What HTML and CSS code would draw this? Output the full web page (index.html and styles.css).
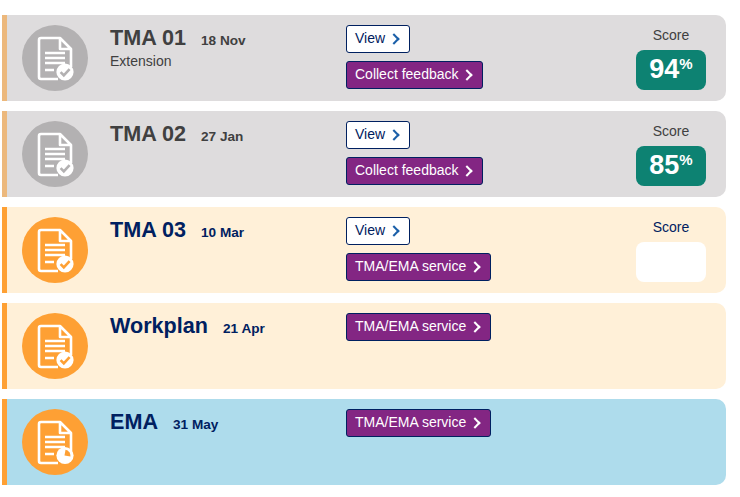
FILE: index.html
```html
<!DOCTYPE html>
<html>
	<head>
		<meta charset="utf-8">
		<title>Assignments</title>
		<link rel="stylesheet" href="styles.css">
	</head>
	<body>
		<svg class="defs" width="0" height="0">
			<symbol id="doc" viewBox="0 0 66 66">
				<path d="M19 13H38L49 24V42M38 13V24H49M36 54H19Q17 54 17 52V15Q17 13 19 13" fill="none" stroke="#fff" stroke-width="2.6" stroke-linejoin="round"/>
				<path d="M23 28H43M23 33H43M23 38H43M23 45H32" fill="none" stroke="#fff" stroke-width="2.6"/>
			</symbol>
			<symbol id="tick" viewBox="0 0 20 20">
				<circle cx="10" cy="10" r="8.6" fill="#fff"/>
				<path d="M5.6 10.2L8.8 13.4L14.6 7.2" fill="none" class="mark" stroke-width="2.6"/>
			</symbol>
			<symbol id="clock" viewBox="0 0 20 20">
				<circle cx="10" cy="9.5" r="8.6" fill="#fff"/>
				<path d="M9.5 9.5L10.5 3.8A6 6 0 0 1 15.5 10.5Z" class="wedge"/>
			</symbol>
		</svg>
		<div class="list">
			<div class="row done">
				<div class="circle">
					<svg class="doc"><use href="#doc"/></svg>
					<svg class="badge"><use href="#tick"/></svg>
				</div>
				<div class="info">
					<div class="heading"><span class="name">TMA 01</span><span class="date">18 Nov</span></div>
					<div class="note">Extension</div>
				</div>
				<div class="actions">
					<a class="btn btn-white">View <i class="arrow"></i></a>
					<a class="btn btn-purple">Collect feedback <i class="arrow"></i></a>
				</div>
				<div class="score">
					<div class="score-label">Score</div>
					<div class="score-box">94<sup>%</sup></div>
				</div>
			</div>
			<div class="row done">
				<div class="circle">
					<svg class="doc"><use href="#doc"/></svg>
					<svg class="badge"><use href="#tick"/></svg>
				</div>
				<div class="info">
					<div class="heading"><span class="name">TMA 02</span><span class="date">27 Jan</span></div>
				</div>
				<div class="actions">
					<a class="btn btn-white">View <i class="arrow"></i></a>
					<a class="btn btn-purple">Collect feedback <i class="arrow"></i></a>
				</div>
				<div class="score">
					<div class="score-label">Score</div>
					<div class="score-box">85<sup>%</sup></div>
				</div>
			</div>
			<div class="row open">
				<div class="circle">
					<svg class="doc"><use href="#doc"/></svg>
					<svg class="badge"><use href="#tick"/></svg>
				</div>
				<div class="info">
					<div class="heading"><span class="name">TMA 03</span><span class="date">10 Mar</span></div>
				</div>
				<div class="actions">
					<a class="btn btn-white">View <i class="arrow"></i></a>
					<a class="btn btn-purple">TMA/EMA service <i class="arrow"></i></a>
				</div>
				<div class="score">
					<div class="score-label">Score</div>
					<div class="score-box empty"></div>
				</div>
			</div>
			<div class="row open">
				<div class="circle">
					<svg class="doc"><use href="#doc"/></svg>
					<svg class="badge"><use href="#tick"/></svg>
				</div>
				<div class="info">
					<div class="heading"><span class="name">Workplan</span><span class="date">21 Apr</span></div>
				</div>
				<div class="actions">
					<a class="btn btn-purple">TMA/EMA service <i class="arrow"></i></a>
				</div>
			</div>
			<div class="row future">
				<div class="circle">
					<svg class="doc"><use href="#doc"/></svg>
					<svg class="badge"><use href="#clock"/></svg>
				</div>
				<div class="info">
					<div class="heading"><span class="name">EMA</span><span class="date">31 May</span></div>
				</div>
				<div class="actions">
					<a class="btn btn-purple">TMA/EMA service <i class="arrow"></i></a>
				</div>
			</div>
		</div>
	</body>
</html>
```
FILE: styles.css
```css
* {
	margin: 0;
	padding: 0;
	box-sizing: border-box;
}

body {
	background: #fff;
	font-family: "Liberation Sans", Arial, sans-serif;
	font-size: 14px;
}

.defs {
	position: absolute;
}

.list {
	display: flex;
	flex-direction: column;
	gap: 10px;
	width: 724px;
	margin: 15px 0 0 2px;
}

.row {
	--mark: #fea034;
	display: flex;
	height: 86px;
	padding: 10px 0 0 15px;
	border-left: 5px solid #fea034;
	border-radius: 0 10px 10px 0;
}

.row.done {
	--mark: #b3b1b2;
	background: #dedcdd;
	border-left-color: #ecb87c;
	color: #404040;
}

.row.open {
	background: #fff0d8;
	color: #002060;
}

.row.future {
	background: #aedcec;
	color: #002060;
}

.circle {
	position: relative;
	flex: none;
	width: 66px;
	height: 66px;
	border-radius: 50%;
	background: #fea034;
}

.done .circle {
	background: #b3b1b2;
}

.doc {
	display: block;
	width: 66px;
	height: 66px;
}

.badge {
	position: absolute;
	left: 33px;
	top: 37px;
	width: 20px;
	height: 20px;
}

.mark {
	stroke: var(--mark);
}

.wedge {
	fill: var(--mark);
}

.info {
	flex: none;
	width: 236px;
	margin-left: 22px;
}

.heading {
	display: flex;
	align-items: baseline;
}

.name {
	font-size: 21.6px;
	font-weight: bold;
	line-height: 25px;
}

.date {
	margin-left: 15px;
	font-size: 13.6px;
	font-weight: bold;
}

.note {
	margin-top: 3px;
	font-size: 14px;
	line-height: 16px;
}

.actions {
	flex: none;
	display: flex;
	flex-direction: column;
	align-items: flex-start;
	gap: 8px;
	width: 290px;
}

.btn {
	display: flex;
	align-items: center;
	height: 28px;
	padding: 0 8px 2px;
	border: 1px solid #002060;
	border-radius: 3px;
	font-size: 14px;
	white-space: pre;
}

.btn-white {
	background: #fff;
	color: #002060;
}

.btn-purple {
	background: #832683;
	color: #fff;
}

.arrow {
	display: inline-block;
	width: 8px;
	height: 8px;
	margin: 2px 3px 0 1px;
	border-top: 2px solid #fff;
	border-right: 2px solid #fff;
	transform: rotate(45deg);
}

.btn-white .arrow {
	border-color: #1a5fa8;
}

.score {
	flex: none;
	width: 70px;
	text-align: center;
}

.score-label {
	font-size: 14px;
	line-height: 20px;
}

.score-box {
	height: 40px;
	margin-top: 5px;
	border-radius: 8px;
	background: #0d8272;
	color: #fff;
	font-size: 27px;
	font-weight: bold;
	line-height: 38px;
}

.score-box sup {
	font-size: 15px;
	line-height: 0;
	vertical-align: 9px;
}

.score-box.empty {
	background: #fff;
}
```
